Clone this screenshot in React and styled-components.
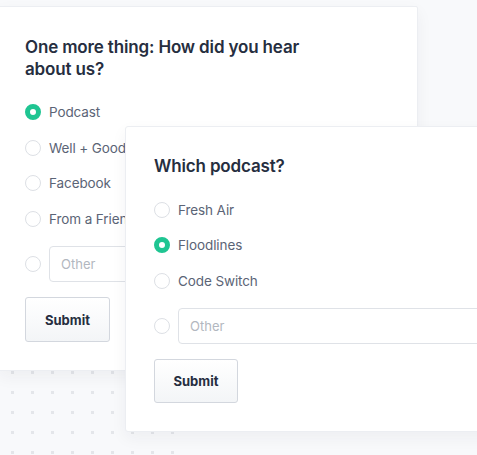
import React from "react";
import styled, { createGlobalStyle } from "styled-components";

const GlobalStyle = createGlobalStyle`
  html, body {
    margin: 0;
    padding: 0;
    background: #f8f9fb;
  }
  body {
    font-family: "Inter", "Noto Sans", sans-serif;
    -webkit-font-smoothing: antialiased;
  }
  * { box-sizing: border-box; }
`;

const Stage = styled.div`
  position: relative;
  width: 477px;
  height: 455px;
  overflow: hidden;
  padding-top: 6px;
`;

const DotField = styled.svg`
  position: absolute;
  left: 11px;
  top: 351px;
  width: 172px;
  height: 110px;
`;

const Card = styled.section`
  position: relative;
  background: #ffffff;
  border: 1px solid #eceef2;
  box-shadow: 0 6px 16px rgba(30, 40, 60, 0.05);
  display: flex;
  flex-direction: column;
  align-items: flex-start;
`;

const BackCard = styled(Card)`
  width: 419px;
  margin-left: -1px;
  padding: 30px 22px 28px 25px;
  border-radius: 0 2px 2px 0;
`;

const FrontCard = styled(Card)`
  position: absolute;
  left: 125px;
  top: 126px;
  width: 400px;
  padding: 29px 0 28px 28px;
  border-radius: 3px;
`;

const Title = styled.h2`
  margin: 0 0 24px;
  max-width: ${(p) => p.$max || "none"};
  font-size: 17px;
  line-height: 21.5px;
  font-weight: 600;
  color: #262e40;
  letter-spacing: -0.15px;
`;

const Options = styled.div`
  display: flex;
  flex-direction: column;
  gap: 19.5px;
  width: 100%;
  margin-bottom: 15px;
`;

const Row = styled.label`
  display: flex;
  align-items: center;
  gap: 8px;
  height: ${(p) => (p.$tall ? "36px" : "16px")};
`;

const Radio = styled.span`
  flex: none;
  width: 16px;
  height: 16px;
  border-radius: 50%;
  background: #fff;
  border: ${(p) => (p.$checked ? "5px solid #1fc592" : "1px solid #dde0e5")};
`;

const Label = styled.span`
  font-size: 13.5px;
  line-height: 16px;
  color: #5b6476;
  white-space: nowrap;
  letter-spacing: -0.1px;
`;

const OtherInput = styled.div`
  flex: 1;
  height: 36px;
  border: 1px solid #dfe2e7;
  border-radius: 4px;
  display: flex;
  align-items: center;
  padding-left: 11px;
  font-size: 13px;
  color: #b2b7c0;
  background: #fff;
`;

const SubmitButton = styled.button`
  width: ${(p) => p.$w}px;
  height: ${(p) => p.$h}px;
  border: 1px solid #d3d7de;
  border-radius: 3px;
  background: linear-gradient(#ffffff, #f3f5f7);
  font-family: inherit;
  font-size: 13px;
  font-weight: 700;
  color: #262e40;
  padding: 0;
`;

function RadioRow({ label, checked }) {
  return (
    <Row>
      <Radio $checked={checked} />
      <Label>{label}</Label>
    </Row>
  );
}

function OtherRow() {
  return (
    <Row $tall>
      <Radio />
      <OtherInput>Other</OtherInput>
    </Row>
  );
}

function Dots() {
  return (
    <DotField viewBox="0 0 172 110">
      <defs>
        <pattern id="dots" width="20" height="20" patternUnits="userSpaceOnUse">
          <rect x="0" y="0" width="3" height="3" fill="#e4e6ea" />
        </pattern>
      </defs>
      <rect width="172" height="110" fill="url(#dots)" />
    </DotField>
  );
}

export default function App() {
  return (
    <>
      <GlobalStyle />
      <Stage>
        <Dots />
        <BackCard>
          <Title $max="300px">One more thing: How did you hear about us?</Title>
          <Options>
            <RadioRow label="Podcast" checked />
            <RadioRow label="Well + Good" />
            <RadioRow label="Facebook" />
            <RadioRow label="From a Friend" />
            <OtherRow />
          </Options>
          <SubmitButton $w={85} $h={45}>Submit</SubmitButton>
        </BackCard>
        <FrontCard>
          <Title>Which podcast?</Title>
          <Options>
            <RadioRow label="Fresh Air" />
            <RadioRow label="Floodlines" checked />
            <RadioRow label="Code Switch" />
            <OtherRow />
          </Options>
          <SubmitButton $w={84} $h={44}>Submit</SubmitButton>
        </FrontCard>
      </Stage>
    </>
  );
}
